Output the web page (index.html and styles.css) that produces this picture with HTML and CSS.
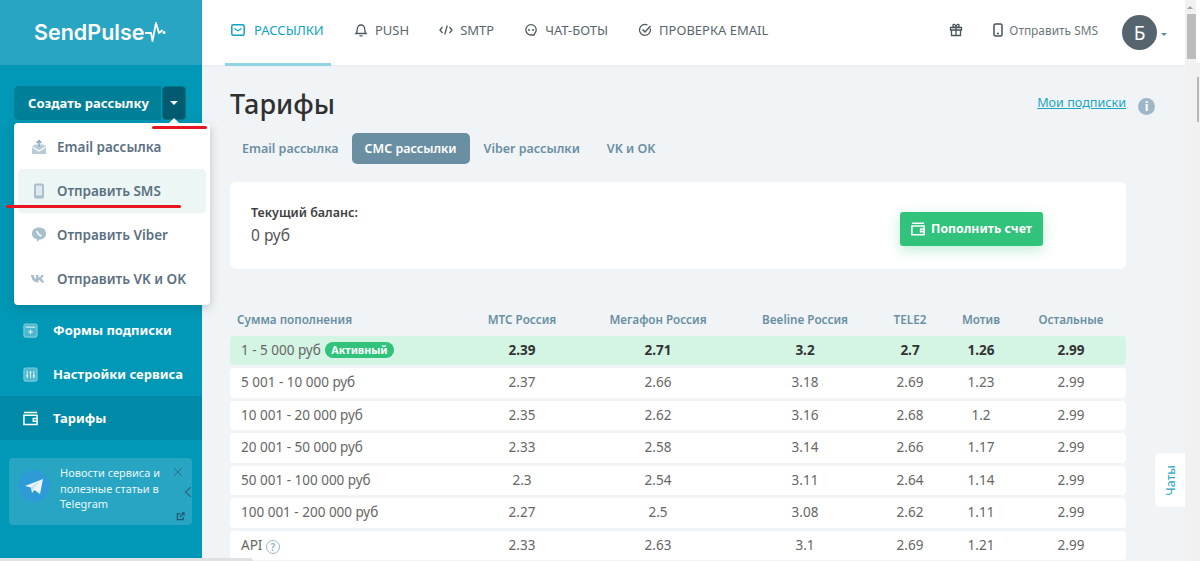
FILE: index.html
```html
<!DOCTYPE html>
<html lang="ru">
<head>
<meta charset="utf-8">
<title>Тарифы</title>
<link rel="stylesheet" href="styles.css">
</head>
<body>
<div class="app">
  <aside class="sidebar">
    <div class="logo"><span>SendPulse</span><svg class="logo-pulse" viewBox="0 0 21 20" width="21" height="20"><path d="M0 11h6l1.500 8L11 1l3 10 3-2.500" fill="none" stroke="#fff" stroke-width="1.800" stroke-linecap="round" stroke-linejoin="round"/><circle cx="19" cy="10.500" r="1.500" fill="#fff"/></svg></div>
    <div class="create">
      <button class="create-main">Создать рассылку</button>
      <button class="create-caret"><i></i></button>
    </div>
    <nav class="side-nav">
      <a class="side-item"><svg viewBox="0 0 16 16" width="15" height="15"><rect x="1" y="1" width="14" height="14" rx="2" fill="#4db7cd" stroke="#7fcddd" stroke-width="1.200"/><path d="M3 4.500h10M8 7v5M5.500 9.500h5" stroke="#cdeef4" stroke-width="1.300" fill="none"/></svg>Формы подписки</a>
      <a class="side-item"><svg viewBox="0 0 16 16" width="15" height="15"><rect x="1" y="1" width="14" height="14" rx="2" fill="#4db7cd" stroke="#7fcddd" stroke-width="1.200"/><path d="M4.500 4v8M8 4v8M11.500 4v8" stroke="#cdeef4" stroke-width="1.200"/><path d="M3.500 9.500h2M7 6h2M10.500 9.500h2" stroke="#fff" stroke-width="1.400"/></svg>Настройки сервиса</a>
      <a class="side-item is-active"><svg viewBox="0 0 16 16" width="15" height="15"><path d="M1 1.500h14M1 4.500h14v10H1zM15 8h-4v3h4" fill="none" stroke="#fff" stroke-width="1.600"/></svg>Тарифы</a>
    </nav>
    <div class="tg">
      <span class="tg-icon"><svg viewBox="0 0 32 32" width="32" height="32"><circle cx="16" cy="16" r="16" fill="#2f9bd6"/><path d="M7 16l18-7-3 15-5.500-4-2.500 3-1-5.500z" fill="#eaf5fb"/><path d="M12.500 17.500L22 11l-7 8-.500 3z" fill="#c6e2f1"/></svg></span>
      <p>Новости сервиса и полезные статьи в Telegram</p>
      <svg class="tg-close" viewBox="0 0 10 10" width="10" height="10"><path d="M1 1l8 8M9 1l-8 8" stroke="#2f6c82" stroke-width="1"/></svg>
      <svg class="tg-arrow" viewBox="0 0 8 12" width="8" height="12"><path d="M7 1L1.500 6 7 11" fill="none" stroke="#2f6c82" stroke-width="1.300"/></svg>
      <svg class="tg-link" viewBox="0 0 10 10" width="9" height="9"><path d="M5 2H1.500v6.500H8V5.500M4.500 5.500L9 1M6.500 1H9v2.500" fill="none" stroke="#23566a" stroke-width="1.400"/></svg>
    </div>
    <div class="menu">
      <span class="menu-tip"></span>
      <a class="menu-item"><svg viewBox="0 0 16 16" width="16" height="16"><path d="M1 7.500l3-2h8l3 2V15H1z" fill="#b9cbd5"/><path d="M1.500 8L8 12l6.500-4" fill="none" stroke="#fff" stroke-width="1.200"/><path d="M8 8V1.500M5.500 4L8 1.500 10.500 4" fill="none" stroke="#8eabba" stroke-width="1.500"/></svg>Email рассылка</a>
      <a class="menu-item is-hover"><svg viewBox="0 0 16 16" width="16" height="16"><rect x="3" y="0.500" width="10" height="15" rx="2" fill="#a9bfcb"/><rect x="5" y="2.500" width="6" height="10" fill="#dfe8ec"/></svg>Отправить SMS</a>
      <a class="menu-item"><svg viewBox="0 0 16 16" width="16" height="16"><path d="M8 .5c4 0 7 2 7 6s-3 6-6.500 6L6 15v-2.700C3 11.500 1 10 1 6.500S4 .5 8 .5z" fill="#a9bfcb"/><path d="M5.500 4c1 2.500 2.500 4 5 5" fill="none" stroke="#fff" stroke-width="1.600"/></svg>Отправить Viber</a>
      <a class="menu-item"><svg viewBox="0 0 16 16" width="16" height="16"><path d="M0 4h2.700c.3 2 1.200 3.700 2.300 4V4h2.500v2.700C8.700 6.500 9.700 5.200 10.200 4h2.500c-.4 1.700-1.500 3-2.500 3.800 1.100.7 2.400 1.900 3 3.700h-2.700c-.5-1.300-1.600-2.400-3-2.600v2.600H7C3 11.500.3 8.500 0 4z" fill="#a9bfcb"/></svg>Отправить VK и OK</a>
    </div>
    <span class="mark mark-a"></span>
    <span class="mark mark-b"></span>
  </aside>

  <div class="main">
    <header class="topbar">
      <nav class="tabs">
        <a class="tab is-active"><svg viewBox="0 0 14 12" width="14" height="12"><rect x="0.800" y="0.800" width="12.400" height="10.400" rx="1.500" fill="none" stroke="#0fa3c4" stroke-width="1.500"/><path d="M3.500 4.500L7 6.800l3.500-2.300" fill="none" stroke="#0fa3c4" stroke-width="1.300"/></svg>РАССЫЛКИ</a>
        <a class="tab"><svg viewBox="0 0 14 14" width="14" height="14"><path d="M2 10.500c1-1 1.300-2 1.300-4.500 0-2.300 1.500-4 3.700-4s3.700 1.700 3.700 4c0 2.500.3 3.500 1.300 4.500zM5.500 12.800h3" fill="none" stroke="#4f5a60" stroke-width="1.300"/></svg>PUSH</a>
        <a class="tab"><svg viewBox="0 0 14 12" width="14" height="12"><path d="M3.500 3L1 6l2.500 3M10.500 3L13 6l-2.500 3M8.300 1.500L5.700 10.500" fill="none" stroke="#4f5a60" stroke-width="1.300"/></svg>SMTP</a>
        <a class="tab"><svg viewBox="0 0 14 14" width="14" height="14"><path d="M10 12H7a5.200 5.200 0 1 1 5.200-5.200c0 1.500-.5 2.500-1.200 3.200z" fill="none" stroke="#4f5a60" stroke-width="1.300"/><circle cx="5" cy="7" r="1" fill="#4f5a60"/><circle cx="9" cy="7" r="1" fill="#4f5a60"/></svg>ЧАТ-БОТЫ</a>
        <a class="tab"><svg viewBox="0 0 14 14" width="14" height="14"><path d="M12.300 5.500A5.500 5.500 0 1 1 9.500 2" fill="none" stroke="#4f5a60" stroke-width="1.300"/><path d="M4.500 6.500L7 9l5.500-6" fill="none" stroke="#4f5a60" stroke-width="1.500"/></svg>ПРОВЕРКА EMAIL</a>
      </nav>
      <div class="top-right">
        <svg class="gift" viewBox="0 0 14 14" width="14" height="14"><path d="M1.500 4.500h11v2.500h-11zM2.500 7v5.500h9V7M7 4.500v8M7 4.500C5 4.500 3.500 3.500 4 2s3-.5 3 2.500c0-3 2.500-4 3-2.500s-1 2.500-3 2.500" fill="none" stroke="#46545c" stroke-width="1.300"/></svg>
        <a class="sms-link"><svg viewBox="0 0 10 14" width="10" height="14"><rect x="1" y="1" width="8" height="12" rx="1.500" fill="none" stroke="#46545c" stroke-width="1.500"/><path d="M4 10.500h2" stroke="#46545c" stroke-width="1.300"/></svg>Отправить SMS</a>
        <span class="avatar">Б</span><i class="avatar-caret"></i>
      </div>
    </header>

    <main class="content">
      <div class="title-row">
        <h1>Тарифы</h1>
        <div class="subs"><a>Мои подписки</a><span class="info">i</span></div>
      </div>
      <div class="pills">
        <a class="pill">Email рассылка</a>
        <a class="pill is-active">СМС рассылки</a>
        <a class="pill">Viber рассылки</a>
        <a class="pill">VK и OK</a>
      </div>
      <section class="balance">
        <div class="balance-info">
          <b>Текущий баланс:</b>
          <span>0 руб</span>
        </div>
        <button class="topup"><svg viewBox="0 0 16 16" width="14" height="14"><path d="M1 1.500h14M1 4.500h14v10H1zM15 8h-4v3h4" fill="none" stroke="#fff" stroke-width="1.800"/></svg>Пополнить счет</button>
      </section>
      <section class="rates">
        <div class="row head"><div class="first">Сумма пополнения</div><div>МТС Россия</div><div>Мегафон Россия</div><div>Beeline Россия</div><div>TELE2</div><div>Мотив</div><div>Остальные</div></div>
        <div class="row current"><div class="first">1 - 5 000 руб <span class="badge">Активный</span></div><div>2.39</div><div>2.71</div><div>3.2</div><div>2.7</div><div>1.26</div><div>2.99</div></div>
        <div class="row"><div class="first">5 001 - 10 000 руб</div><div>2.37</div><div>2.66</div><div>3.18</div><div>2.69</div><div>1.23</div><div>2.99</div></div>
        <div class="row"><div class="first">10 001 - 20 000 руб</div><div>2.35</div><div>2.62</div><div>3.16</div><div>2.68</div><div>1.2</div><div>2.99</div></div>
        <div class="row"><div class="first">20 001 - 50 000 руб</div><div>2.33</div><div>2.58</div><div>3.14</div><div>2.66</div><div>1.17</div><div>2.99</div></div>
        <div class="row"><div class="first">50 001 - 100 000 руб</div><div>2.3</div><div>2.54</div><div>3.11</div><div>2.64</div><div>1.14</div><div>2.99</div></div>
        <div class="row"><div class="first">100 001 - 200 000 руб</div><div>2.27</div><div>2.5</div><div>3.08</div><div>2.62</div><div>1.11</div><div>2.99</div></div>
        <div class="row"><div class="first">API <span class="help">?</span></div><div>2.33</div><div>2.63</div><div>3.1</div><div>2.69</div><div>1.21</div><div>2.99</div></div>
      </section>
      <a class="chats"><span>Чаты</span></a>
    </main>
  </div>

  <div class="vscroll">
    <div class="vscroll-top"><i class="arrow-up"></i><i class="thumb"></i></div>
    <i class="thumb-inner"></i>
  </div>
</div>
<i class="hscroll"></i>
</body>
</html>
```

FILE: styles.css
```css
* { box-sizing: border-box; }
html, body { margin: 0; height: 100%; overflow: hidden; }
body { font-family: "Noto Sans", "Open Sans", sans-serif; color: #4a4a4a; font-size: 14px; background: #f1f4f6; position: relative; }
a { text-decoration: none; }
svg { display: block; flex: none; }

.app { display: flex; height: 561px; }

/* sidebar */
.sidebar { width: 202px; flex: none; background: #0098b6; position: relative; height: 558px; }
.logo { height: 65px; background: #27a5c3; display: flex; align-items: center; padding: 0 0 2px 34px; color: #fff; font-size: 21.500px; font-weight: 600; font-family: "Inter", sans-serif; }
.logo-pulse { margin-left: 1px; }
.create { display: flex; gap: 1px; margin: 21px 0 0 14px; height: 34px; }
.create-main { width: 147px; border: 0; border-radius: 5px 0 0 5px; background: #007f98; color: #fff; font: 700 13px "Noto Sans", sans-serif; padding: 0 0 0 2px; }
.create-caret { width: 24px; border: 1px solid #007886; border-radius: 4px; background: #005a70; padding: 0; display: flex; align-items: center; justify-content: center; }
.create-caret i { border: 4px solid transparent; border-top-color: #fff; border-bottom: 0; }
.side-nav { margin-top: 188px; display: flex; flex-direction: column; }
.side-item { height: 44px; display: flex; align-items: center; gap: 15px; padding-left: 23px; color: #fff; font-weight: 700; font-size: 13px; }
.side-item.is-active { background: #008aa8; }
.tg { position: relative; display: flex; align-items: flex-start; gap: 10px; margin: 18px 10px 0 9px; height: 67px; padding: 12px 8px 0 9px; border-radius: 4px; background: #27a5c3; }
.tg p { margin: -5px 0 0; color: #e9f7fa; font-size: 11px; line-height: 15.700px; width: 108px; }
.tg-close { position: absolute; right: 9px; top: 9px; }
.tg-arrow { position: absolute; right: 0; top: 28px; }
.tg-link { position: absolute; right: 7px; top: 54px; }

/* dropdown */
.menu { position: absolute; left: 14px; top: 123px; width: 196px; height: 182px; padding: 2px 4px; background: #fff; border-radius: 4px; box-shadow: 0 3px 10px rgba(0, 60, 80, .25); z-index: 3; display: flex; flex-direction: column; }
.menu-tip { position: absolute; left: 155px; top: -5px; border: 5px solid transparent; border-top: 0; border-bottom-color: #fff; }
.menu-item { height: 44px; display: flex; align-items: center; gap: 10px; padding-left: 13px; color: #5b7183; font-weight: 600; font-size: 13.500px; border-radius: 4px; }
.menu-item.is-hover { background: #ebf6f5; }
.mark { position: absolute; height: 3px; border-radius: 2px; background: #e8141f; z-index: 4; }
.mark-a { left: 152px; top: 126px; width: 55px; }
.mark-b { left: 6px; top: 205px; width: 175px; }

/* main */
.main { flex: 1; min-width: 0; display: flex; flex-direction: column; }
.topbar { height: 65px; background: #fff; display: flex; justify-content: space-between; align-items: center; box-shadow: 0 1px 3px rgba(0, 0, 0, .04); padding: 0 18px 0 23px; position: relative; }
.tabs { display: flex; height: 65px; }
.tab { display: flex; align-items: center; gap: 7px; padding-bottom: 6px; margin-right: 30px; height: 65px; color: #5a666d; font-size: 13px; position: relative; }
.tab.is-active { color: #0fa3c4; width: 106px; margin-right: 23px; padding-left: 6px; gap: 9px; }
.tab.is-active::after { content: ""; position: absolute; left: 0; right: 0; bottom: -1px; height: 3px; background: #8fd5e3; }
.top-right { display: flex; align-items: center; }
.gift { margin-bottom: 5px; }
.sms-link { display: flex; align-items: center; gap: 6px; margin: 0 24px 5px 30px; color: #6b767c; font-size: 11.900px; }
.avatar { width: 35px; height: 35px; border-radius: 50%; background: #56656d; color: #fff; font-size: 19px; display: flex; align-items: center; justify-content: center; }
.avatar-caret { margin-left: 4px; margin-top: 3px; border: 3.500px solid transparent; border-top-color: #5b8ba5; border-bottom: 0; }

.content { flex: 1; position: relative; padding: 0 59px 0 28px; }
.title-row { display: flex; justify-content: space-between; align-items: center; height: 64px; padding-top: 12px; }
h1 { margin: 0; font-size: 27px; font-weight: 500; color: #303030; }
.subs { display: flex; align-items: flex-start; gap: 12px; margin-right: -29px; padding-top: 2px; }
.subs a { color: #1ba6c4; font-size: 12.600px; text-decoration: underline; }
.info { width: 17px; height: 17px; border-radius: 50%; background: #9db7c7; color: #fff; font-weight: 800; font-size: 12px; display: flex; align-items: center; justify-content: center; margin-top: 4px; }
.pills { display: flex; height: 31px; margin-top: 4px; gap: 1px; }
.pill { display: flex; align-items: center; padding: 0 13px; color: #6a8fa3; font-weight: 600; font-size: 12.500px; border-radius: 5px; }
.pill:first-child { padding: 0 12px; }
.pill.is-active { background: #6a8fa3; color: #fff; }
.balance { margin-top: 18px; height: 87px; background: #fff; border-radius: 6px; display: flex; align-items: center; justify-content: space-between; padding: 0 83px 0 21px; }
.balance-info { display: flex; flex-direction: column; gap: 3px; margin-bottom: 2px; }
.balance-info b { font-size: 12.500px; font-weight: 600; color: #3e3e3e; }
.balance-info span { font-size: 15.500px; color: #555; }
.topup { display: flex; align-items: center; justify-content: center; gap: 6px; width: 143px; height: 34px; margin-top: 6px; border: 0; border-radius: 3px; background: #31c27c; color: #fff; font: 700 12.300px "Noto Sans", sans-serif; box-shadow: 0 4px 14px rgba(49, 194, 124, .3); }

.rates { margin-top: 37px; }
.row { display: grid; grid-template-columns: 224px 136px 136px 158px 52px 90px 90px; padding-right: 10px; padding-bottom: 2px; height: 29.300px; margin-bottom: 3.200px; align-items: center; background: #fff; border-radius: 4px; color: #666; font-size: 13.500px; text-align: center; }
.row .first { text-align: left; padding-left: 11px; white-space: nowrap; }
.row.head { background: none; color: #6a8fa3; font-weight: 600; font-size: 11.700px; height: 26px; margin-bottom: 4px; padding-bottom: 0; }
.row.head .first { padding-left: 7px; }
.row.current { background: #d4f4e4; font-weight: 700; color: #333; }
.row.current .first { font-weight: 400; color: #666; }
.badge { display: inline-block; background: #31c27c; color: #fff; font-weight: 700; font-size: 10.700px; line-height: 16px; padding: 0 6px; border-radius: 9px; margin-left: 1px; vertical-align: 1px; }
.help { display: inline-flex; width: 14px; height: 14px; border: 1.500px solid #9db7c7; border-radius: 50%; align-items: center; justify-content: center; color: #9db7c7; font-size: 10px; font-weight: 700; vertical-align: -1px; }
.chats { position: absolute; right: 0; top: 388px; width: 30px; height: 54px; background: #fff; border-radius: 5px 0 0 5px; display: flex; align-items: center; justify-content: center; color: #2ba7c4; font-size: 12.500px; }
.chats span { transform: rotate(-90deg); white-space: nowrap; }

/* scrollbars */
.vscroll { width: 15px; flex: none; background: #f1f1f1; position: relative; }
.vscroll-top { position: relative; height: 63px; background: #fff; }
.arrow-up { position: absolute; left: 0; top: 0; width: 11px; height: 63px; background: #f1f1f1; }
.arrow-up::before { content: ""; position: absolute; left: 2px; top: 6px; border: 3.500px solid transparent; border-top: 0; border-bottom-color: #a3a3a3; }
.thumb { position: absolute; left: 2px; top: 14px; width: 9px; height: 45px; background: #bcbcbc; }
.thumb-inner { position: absolute; left: 12px; top: 77px; width: 2px; height: 45px; background: #b8b8b8; }
.hscroll { position: absolute; left: 0; bottom: 0; width: 253px; height: 3px; background: #dfe2e4; border-radius: 0 3px 0 0; z-index: 5; }
```
